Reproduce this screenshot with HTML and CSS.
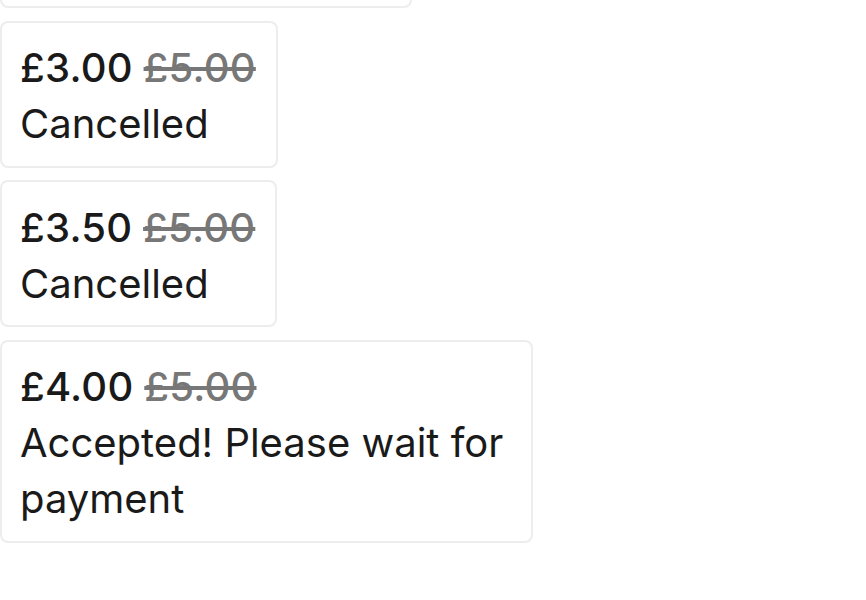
FILE: index.html
```html
<!DOCTYPE html>
<html lang="en">
<head>
<meta charset="utf-8">
<title>Offers</title>
<link rel="stylesheet" href="styles.css">
</head>
<body>
<div class="offers">
  <div class="offer">
    <div class="price"><span class="now">£2.50</span> <s class="was">£5.00</s></div>
    <div class="status">Declined by a seller</div>
  </div>
  <div class="offer">
    <div class="price"><span class="now">£3.00</span> <s class="was">£5.00</s></div>
    <div class="status">Cancelled</div>
  </div>
  <div class="offer">
    <div class="price"><span class="now">£3.50</span> <s class="was">£5.00</s></div>
    <div class="status">Cancelled</div>
  </div>
  <div class="offer">
    <div class="price"><span class="now">£4.00</span> <s class="was">£5.00</s></div>
    <div class="status">Accepted! Please wait for payment</div>
  </div>
</div>
</body>
</html>
```
FILE: styles.css
```css
html, body {
  margin: 0;
  padding: 0;
  background: #ffffff;
}
body {
  font-family: Inter, "Noto Sans", sans-serif;
  font-size: 40px;
  line-height: 56px;
  color: #1a1a1a;
}
.offers {
  display: flex;
  flex-direction: column;
  align-items: flex-start;
  gap: 12.5px;
  margin-top: -139px;
}
.offer {
  box-sizing: border-box;
  max-width: 533px;
  padding: 17.5px 20px 13.5px 18px;
  border: 2px solid #ededed;
  border-radius: 8px;
  background: #fff;
}
.price {
  font-weight: 500;
  letter-spacing: 0.2px;
}
.was {
  color: #777777;
}
```
